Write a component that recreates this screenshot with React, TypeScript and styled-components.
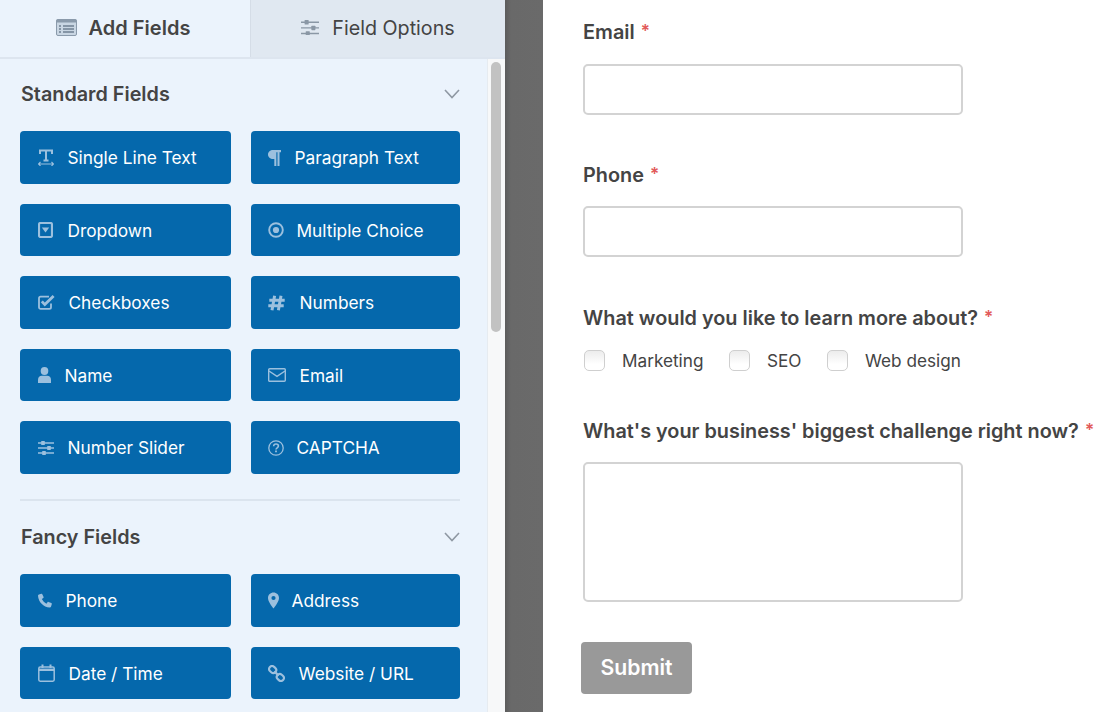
import { ReactNode } from 'react';
import styled, { createGlobalStyle } from 'styled-components';

const GlobalStyle = createGlobalStyle`
  html, body {
    margin: 0;
    padding: 0;
    height: 100%;
    overflow: hidden;
    background: #ffffff;
    font-family: Inter, "Liberation Sans", sans-serif;
  }
  * { box-sizing: border-box; }
`;

const Page = styled.div`
  display: flex;
  width: 1116px;
  height: 712px;
  overflow: hidden;
`;

const Sidebar = styled.aside`
  width: 505px;
  flex: none;
  display: flex;
  flex-direction: column;
  background: #ebf3fc;
`;

const Tabs = styled.div`
  display: flex;
  height: 59px;
  flex: none;
  border-bottom: 2px solid #dde5ef;
`;

const Tab = styled.div<{ $active?: boolean }>`
  width: ${(p) => (p.$active ? '250px' : '255px')};
  display: flex;
  align-items: center;
  justify-content: center;
  gap: 12px;
  padding: ${(p) => (p.$active ? '0 4px 2px 0' : '0 0 2px 0')};
  font-size: ${(p) => (p.$active ? '20px' : '19.7px')};
  font-weight: ${(p) => (p.$active ? 600 : 400)};
  color: #444444;
  background: ${(p) => (p.$active ? '#ebf3fc' : '#e0e8f1')};
  border-left: ${(p) => (p.$active ? 'none' : '1px solid #d5dde7')};
`;

const Body = styled.div`
  flex: 1;
  display: flex;
  min-height: 0;
`;

const Panel = styled.div`
  width: 487px;
  flex: none;
  padding: 0 27px 0 20px;
  overflow: hidden;
`;

const Track = styled.div`
  position: relative;
  flex: 1;
  background: #f7f8f9;
  border-left: 1px solid #e6ebf0;
`;

const Thumb = styled.div`
  position: absolute;
  top: 3px;
  left: 3px;
  width: 10px;
  height: 270px;
  border-radius: 5px;
  background: #c2c2c2;
`;

const GroupHead = styled.div<{ $first?: boolean }>`
  display: flex;
  align-items: center;
  justify-content: space-between;
  height: 24px;
  margin-top: ${(p) => (p.$first ? '23px' : '24px')};
  margin-bottom: ${(p) => (p.$first ? '25px' : '25.5px')};
  padding-left: 1px;
  font-size: 19.8px;
  font-weight: 600;
  color: #444444;
`;

const Grid = styled.div`
  display: grid;
  grid-template-columns: 210.5px 209px;
  column-gap: 20px;
  row-gap: 20px;
  grid-auto-rows: 52.5px;
`;

const FieldButton = styled.div`
  display: flex;
  align-items: center;
  gap: 12px;
  padding: 1px 0 0 17px;
  border-radius: 4px;
  background: #0568ac;
  color: #ffffff;
  font-size: 17.3px;
  font-weight: 400;

  &:nth-child(odd) {
    padding-left: 18px;
  }
`;

const IconSlot = styled.span<{ $w: number; $muted?: boolean }>`
  display: flex;
  align-items: center;
  justify-content: flex-start;
  width: ${(p) => p.$w}px;
  flex: none;
  color: ${(p) => (p.$muted ? '#8a97a5' : '#9cc0de')};
`;

const Divider = styled.hr`
  height: 2px;
  margin: 25px 0 0;
  border: none;
  background: #dbe4ee;
`;

const Gutter = styled.div`
  width: 38px;
  flex: none;
  background: linear-gradient(90deg, #5c5c5c 0, #696969 6px, #6a6a6a 100%);
`;

const Preview = styled.main`
  flex: 1;
  padding: 20px 0 0 40px;
  background: #ffffff;
`;

const Label = styled.div`
  display: flex;
  align-items: center;
  gap: 6px;
  height: 24px;
  white-space: nowrap;
  font-size: 19.85px;
  font-weight: 600;
  color: #444444;
`;

const Star = styled.span`
  position: relative;
  top: -1px;
  font-size: 17px;
  font-weight: 600;
  color: #e25a5a;
`;

const TextInput = styled.div<{ $tight?: boolean }>`
  width: 380px;
  height: 51px;
  margin: ${(p) => (p.$tight ? '19px 0 49px' : '20px 0 48px')};
  border: 2px solid #d3d3d3;
  border-radius: 5px;
  background: #ffffff;
`;

const TextArea = styled(TextInput)`
  height: 140px;
  margin: 19px 0 40px;
`;

const Options = styled.div`
  display: flex;
  align-items: center;
  height: 22px;
  margin: 19px 0 48px;
  padding-left: 1px;
`;

const Option = styled.label`
  display: flex;
  align-items: center;
  gap: 17px;
  margin-right: 25.5px;
  font-size: 17.2px;
  color: #444444;
`;

const Box = styled.span`
  width: 21px;
  height: 21px;
  border: 1.5px solid #cfcfcf;
  border-radius: 5px;
  background: linear-gradient(180deg, #ececec 0, #ffffff 70%);
`;

const Submit = styled.button`
  display: block;
  width: 111px;
  height: 52px;
  margin-left: -2px;
  padding: 0 0 2px;
  border: none;
  border-radius: 4px;
  background: #999999;
  color: #ffffff;
  font-family: inherit;
  font-size: 21.2px;
  font-weight: 600;
`;

const TextIcon = () => (
  <svg width="16" height="17" viewBox="0 0 16 17" fill="none" stroke="currentColor">
    <path d="M2 5V1.400h12V5M8 1.400V11.500M5.500 11.500h5" strokeWidth="2" />
    <path d="M.8 15h14.400M2.500 13l-2 2 2 2M13.500 13l2 2-2 2" strokeWidth="1.100" />
  </svg>
);
const ParagraphIcon = () => (
  <svg width="13" height="16" viewBox="0 0 14 17">
    <path fill="currentColor" d="M5.500 0H14v2.200h-1.600V17h-2.200V2.200H9V17H6.800v-7.300H5.500C2.400 9.700 0 7.600 0 4.800 0 2 2.400 0 5.500 0z" />
  </svg>
);
const DropdownIcon = () => (
  <svg width="15" height="16" viewBox="0 0 15 16">
    <rect x="1" y="1" width="13" height="14" rx="1.600" fill="none" stroke="currentColor" strokeWidth="2.200" />
    <path d="M3.800 5.400h7.400L7.500 10.400z" fill="currentColor" />
  </svg>
);
const RadioIcon = () => (
  <svg width="16" height="16" viewBox="0 0 16 16">
    <circle cx="8" cy="8" r="6.800" fill="none" stroke="currentColor" strokeWidth="1.900" />
    <circle cx="8" cy="8" r="3.100" fill="currentColor" />
  </svg>
);
const CheckIcon = () => (
  <svg width="17" height="15" viewBox="0 0 17 15">
    <path d="M13 8.400v3.800c0 1-.7 1.600-1.600 1.600H2.600c-.9 0-1.600-.6-1.600-1.600V3.200c0-.9.700-1.600 1.600-1.600h8.400" fill="none" stroke="currentColor" strokeWidth="1.800" />
    <path d="M3.800 6.400l3 3.200L15.600 1" fill="none" stroke="currentColor" strokeWidth="2.800" />
  </svg>
);
const HashIcon = () => (
  <svg width="17" height="16" viewBox="0 0 17 16">
    <path d="M6.600 .8L4 15.200M13 .8L10.400 15.200M1.300 5.200h15.400M.3 10.800h15.400" fill="none" stroke="currentColor" strokeWidth="3" />
  </svg>
);
const PersonIcon = () => (
  <svg width="13" height="16" viewBox="0 0 13 16">
    <ellipse cx="6.500" cy="4" rx="3.800" ry="4" fill="currentColor" />
    <path d="M0 16v-3.400C0 10.400 1.800 8.800 3.600 8.800h5.800c1.800 0 3.600 1.600 3.600 3.800V16z" fill="currentColor" />
  </svg>
);
const MailIcon = () => (
  <svg width="18" height="14" viewBox="0 0 18 14" fill="none" stroke="currentColor" strokeWidth="1.400">
    <rect x="0.700" y="0.700" width="16.600" height="12.600" rx="1" />
    <path d="M1 3l8 5.400L17 3" />
  </svg>
);
const SlidersIcon = ({ size = 16 }: { size?: number }) => (
  <svg width={size} height={size * 0.875} viewBox="0 0 16 14">
    <path d="M0 2h16M0 7h16M0 12h16" stroke="currentColor" strokeWidth="1.300" fill="none" />
    <rect x="3.200" y="0" width="3.600" height="4" rx="0.500" fill="currentColor" />
    <rect x="9.200" y="5" width="3.600" height="4" rx="0.500" fill="currentColor" />
    <rect x="4.200" y="10" width="3.600" height="4" rx="0.500" fill="currentColor" />
  </svg>
);
const QuestionIcon = () => (
  <svg width="16" height="16" viewBox="0 0 16 16" fill="none" stroke="currentColor">
    <circle cx="8" cy="8" r="7.200" strokeWidth="1.300" />
    <path d="M5.600 6.200C5.700 4.800 6.700 4 8 4c1.400 0 2.400.8 2.400 2 0 1.900-2.400 1.700-2.400 3.600" strokeWidth="1.600" />
    <path d="M8 10.500v1.800" strokeWidth="1.800" />
  </svg>
);
const PhoneIcon = () => (
  <svg width="14" height="15" viewBox="0 0 15 15">
    <path fill="currentColor" d="M3.600.300L1 1C.3 1.300 0 1.800 0 2.400 .5 9.300 5.700 14.500 12.600 15c.6 0 1.200-.4 1.400-1l.8-2.700c.1-.4-.1-.8-.5-1l-3.100-1.300c-.4-.1-.7 0-1 .3L9 10.900C7 9.900 5.100 8 4.100 6l1.600-1.200c.3-.3.4-.6.300-1L4.600.8C4.500.4 4 .1 3.600.3z" />
  </svg>
);
const PinIcon = () => (
  <svg width="11" height="17" viewBox="0 0 11 16">
    <path fill="currentColor" fillRule="evenodd" d="M5.500 0C2.500 0 0 2.400 0 5.400 0 8.500 3.500 13.600 5.500 16c2-2.400 5.500-7.500 5.500-10.600C11 2.400 8.500 0 5.500 0zm0 3.400a2.100 2.100 0 110 4.200 2.100 2.100 0 010-4.200z" />
  </svg>
);
const CalendarIcon = () => (
  <svg width="17" height="18" viewBox="0 0 17 18" fill="none" stroke="currentColor">
    <rect x="0.800" y="3" width="15.400" height="14.200" rx="1.400" strokeWidth="1.500" />
    <path d="M1 5.800h15" strokeWidth="2.400" />
    <path d="M4.500 .4v3.600M12.500 .4v3.600" strokeWidth="2" />
  </svg>
);
const LinkIcon = () => (
  <svg width="17" height="17" viewBox="0 0 16 16" fill="none" stroke="currentColor" strokeWidth="2">
    <rect x="0.900" y="1.500" width="7" height="5.600" rx="2.800" transform="rotate(42 4.400 4.300)" />
    <rect x="8.100" y="8.900" width="7" height="5.600" rx="2.800" transform="rotate(42 11.600 11.700)" />
    <path d="M6 6l4 4" />
  </svg>
);
const FormIcon = () => (
  <svg width="21" height="17" viewBox="0 0 21 17">
    <rect x="0.500" y="0.500" width="20" height="16" rx="1.500" fill="#c9d6e3" stroke="#8a9aab" />
    <rect x="0.500" y="0.500" width="20" height="3" fill="#8a9aab" />
    <path d="M3 7h2M7 7h11M3 10h2M7 10h11M3 13h2M7 13h11" stroke="#6f8092" strokeWidth="1.300" />
  </svg>
);
const Chevron = () => (
  <svg width="16" height="10" viewBox="0 0 16 10">
    <path d="M1 1l7 7.500L15 1" fill="none" stroke="#8f98a3" strokeWidth="1.600" />
  </svg>
);

type Field = { label: string; icon: ReactNode; w: number };

const standard: Field[] = [
  { label: 'Single Line Text', icon: <TextIcon />, w: 17.500 },
  { label: 'Paragraph Text', icon: <ParagraphIcon />, w: 15 },
  { label: 'Dropdown', icon: <DropdownIcon />, w: 17.500 },
  { label: 'Multiple Choice', icon: <RadioIcon />, w: 17 },
  { label: 'Checkboxes', icon: <CheckIcon />, w: 18.500 },
  { label: 'Numbers', icon: <HashIcon />, w: 20 },
  { label: 'Name', icon: <PersonIcon />, w: 14.500 },
  { label: 'Email', icon: <MailIcon />, w: 20 },
  { label: 'Number Slider', icon: <SlidersIcon />, w: 17.500 },
  { label: 'CAPTCHA', icon: <QuestionIcon />, w: 17 },
];

const fancy: Field[] = [
  { label: 'Phone', icon: <PhoneIcon />, w: 15.500 },
  { label: 'Address', icon: <PinIcon />, w: 12 },
  { label: 'Date / Time', icon: <CalendarIcon />, w: 18.500 },
  { label: 'Website / URL', icon: <LinkIcon />, w: 19 },
];

const FieldGrid = ({ fields }: { fields: Field[] }) => (
  <Grid>
    {fields.map((f) => (
      <FieldButton key={f.label}>
        <IconSlot $w={f.w}>{f.icon}</IconSlot>
        {f.label}
      </FieldButton>
    ))}
  </Grid>
);

export default function App() {
  return (
    <Page>
      <GlobalStyle />
      <Sidebar>
        <Tabs>
          <Tab $active>
            <FormIcon />
            Add Fields
          </Tab>
          <Tab>
            <IconSlot $w={19} $muted>
              <SlidersIcon size={18} />
            </IconSlot>
            Field Options
          </Tab>
        </Tabs>
        <Body>
          <Panel>
            <GroupHead $first>
              Standard Fields
              <Chevron />
            </GroupHead>
            <FieldGrid fields={standard} />
            <Divider />
            <GroupHead>
              Fancy Fields
              <Chevron />
            </GroupHead>
            <FieldGrid fields={fancy} />
          </Panel>
          <Track>
            <Thumb />
          </Track>
        </Body>
      </Sidebar>
      <Gutter />
      <Preview>
        <Label>
          Email <Star>*</Star>
        </Label>
        <TextInput />
        <Label>
          Phone <Star>*</Star>
        </Label>
        <TextInput $tight />
        <Label>
          What would you like to learn more about? <Star>*</Star>
        </Label>
        <Options>
          <Option>
            <Box />
            Marketing
          </Option>
          <Option>
            <Box />
            SEO
          </Option>
          <Option>
            <Box />
            Web design
          </Option>
        </Options>
        <Label>
          What's your business' biggest challenge right now? <Star>*</Star>
        </Label>
        <TextArea />
        <Submit>Submit</Submit>
      </Preview>
    </Page>
  );
}
